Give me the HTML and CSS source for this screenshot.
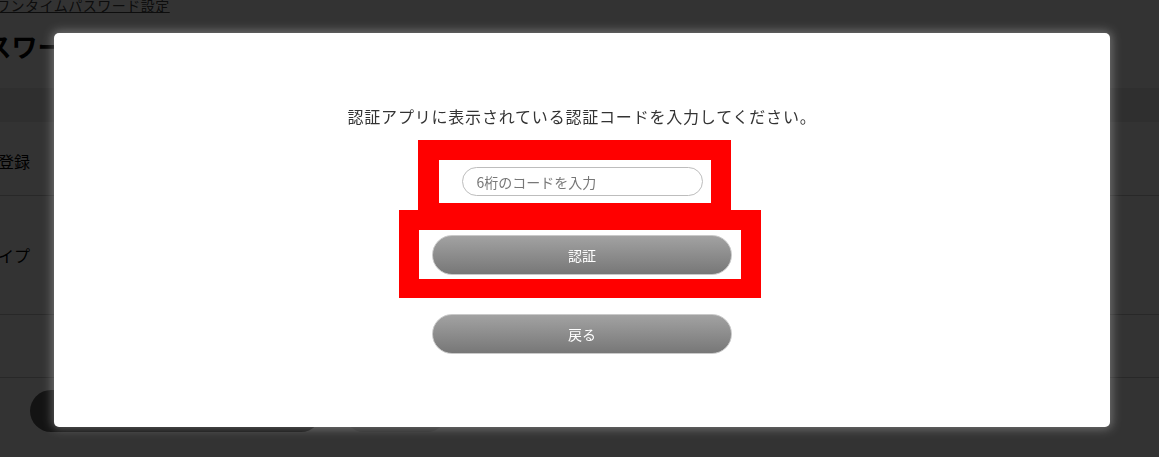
FILE: index.html
```html
<!DOCTYPE html>
<html lang="ja">
<head>
<meta charset="utf-8">
<title>ワンタイムパスワード設定</title>
<link rel="stylesheet" href="styles.css">
</head>
<body>
<div class="page">
  <div class="breadcrumb"><a href="#">ワンタイムパスワード設定</a></div>
  <h1 class="title">ワンタイムパスワード設定</h1>
  <div class="band"></div>
  <div class="row row-1"><span>パスワード登録</span></div>
  <div class="row row-2"><span>認証タイプ</span></div>
  <div class="row row-3"></div>
  <div class="actions">
    <span class="bg-btn bg-btn-main"></span>
    <span class="bg-btn bg-btn-sub"></span>
  </div>
</div>
<div class="overlay"></div>
<div class="modal">
  <p class="lead">認証アプリに表示されている認証コードを入力してください。</p>
  <input class="code-input" type="text" placeholder="6桁のコードを入力">
  <button class="btn btn-verify" type="button">認証</button>
  <button class="btn btn-back" type="button">戻る</button>
  <div class="mark mark-1"></div>
  <div class="mark mark-2"></div>
</div>
</body>
</html>
```

FILE: styles.css
```css
* { box-sizing: border-box; }
html, body { margin: 0; padding: 0; }
body {
  font-family: "Noto Sans CJK JP", "Noto Sans", sans-serif;
  background: #ffffff;
  color: #000;
  overflow: hidden;
  height: 457px;
}
.page {
  width: 1159px;
  position: relative;
}
.breadcrumb {
  height: 16px;
  margin-top: -3px;
  margin-left: -4px;
  font-size: 14px;
  line-height: 16px;
  letter-spacing: 0.5px;
}
.breadcrumb a { color: #444; text-decoration: underline; }
.title {
  margin: 18px 0 0 -170px;
  font-size: 26px;
  font-weight: 700;
  line-height: 30px;
  height: 30px;
  white-space: nowrap;
}
.band {
  margin-top: 27px;
  height: 34px;
  background: #e9e9e9;
}
.row {
  border-bottom: 1px solid #c8c8c8;
  display: flex;
  align-items: center;
  font-size: 16px;
  white-space: nowrap;
}
.row-1 { height: 74px; }
.row-1 span { margin-left: -82px; padding-top: 4px; }
.row-2 { height: 119px; }
.row-2 span { margin-left: -50px; }
.row-3 { height: 63px; }
.actions {
  display: flex;
  gap: 21px;
  padding: 12px 0 0 30px;
}
.bg-btn {
  display: block;
  height: 42px;
  border-radius: 21px;
}
.bg-btn-main { width: 292px; background: #5f5f5f; }
.bg-btn-sub { width: 105px; background: #d6d6d6; }

.overlay {
  position: fixed;
  inset: 0;
  background: rgba(0, 0, 0, 0.8);
}
.modal {
  position: fixed;
  top: 33px;
  left: 54px;
  width: 1056px;
  height: 394px;
  background: #fff;
  border-radius: 5px;
  box-shadow: 0 0 10px 2px rgba(255, 255, 255, 0.3);
  display: flex;
  flex-direction: column;
  align-items: center;
  padding-top: 73px;
}
.lead {
  margin: 0;
  font-size: 16px;
  line-height: 20px;
  letter-spacing: 0.8px;
  color: #333;
}
.code-input {
  margin-top: 41px;
  width: 241px;
  height: 29px;
  border: 1px solid #bdbdbd;
  border-radius: 15px;
  padding: 0 14px;
  font-family: inherit;
  font-size: 14px;
  color: #333;
  outline: none;
  background: #fff;
}
.code-input::placeholder { color: #777; }
.btn {
  width: 300px;
  height: 40px;
  border-radius: 20px;
  border: 1px solid #c9c9c9;
  background: linear-gradient(#a2a2a2, #777777);
  color: #fff;
  font-family: inherit;
  font-size: 14px;
  padding: 0;
}
.btn-verify { margin-top: 39px; }
.btn-back { margin-top: 39px; }
.mark {
  position: absolute;
  border-style: solid;
  border-color: #ff0000;
}
.mark-1 {
  left: 364px;
  top: 107px;
  width: 313px;
  height: 70px;
  border-width: 20px 20px 7px 21px;
}
.mark-2 {
  left: 345px;
  top: 177px;
  width: 362px;
  height: 88px;
  border-width: 20px 20px 19px 20px;
}
```
